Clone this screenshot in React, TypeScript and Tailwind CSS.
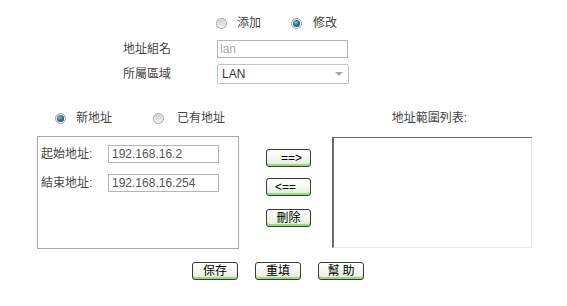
import React from "react";

const FONT = { fontFamily: '"Liberation Sans", "Noto Sans CJK TC", sans-serif' };

function Radio({ checked }: { checked?: boolean }) {
  return (
    <div className="w-[11px] h-[11px] rounded-full border border-[#a0a0a0] bg-gradient-to-b from-[#e6e6e6] to-[#fafafa] flex items-center justify-center shrink-0">
      {checked ? (
        <div className="w-[7px] h-[7px] rounded-full bg-[radial-gradient(circle_at_40%_35%,#7fc3e6_0%,#2a6f96_45%,#123a55_100%)]" />
      ) : (
        <div className="w-[7px] h-[7px] rounded-full bg-gradient-to-b from-[#cfcfcf] to-[#f0f0f0]" />
      )}
    </div>
  );
}

function Btn({ children, className = "" }: { children: React.ReactNode; className?: string }) {
  return (
    <div
      className={
        "w-[45px] h-[18px] rounded-[3px] border border-[#3a3a3a] bg-gradient-to-b from-[#ffffff] via-[#f3f7f0] to-[#dfeed6] shadow-[inset_0_-2px_0_#9ad87a] flex items-center justify-center text-[12px] leading-none text-black " +
        className
      }
    >
      {children}
    </div>
  );
}

export default function App() {
  return (
    <div className="w-[567px] h-[306px] bg-white text-[12px] text-[#444] overflow-hidden" style={FONT}>
      {/* mode radios */}
      <div className="pt-[15px] h-[31px] flex items-center pl-[216px]">
        <Radio />
        <span className="ml-[10px] leading-none">添加</span>
        <div className="ml-[30px]">
          <Radio checked />
        </div>
        <span className="ml-[11px] leading-none">修改</span>
      </div>

      {/* group name */}
      <div className="mt-[9px] h-[18px] flex items-center pl-[123px]">
        <span className="w-[94px] leading-none">地址組名</span>
        <div className="w-[131px] h-[18px] border border-[#b4b4b4] flex items-center pl-[2px] text-[#aaaaaa] leading-none">
          lan
        </div>
      </div>

      {/* zone */}
      <div className="mt-[6px] h-[20px] flex items-center pl-[123px]">
        <span className="w-[94px] leading-none">所屬區域</span>
        <div className="w-[132px] h-[20px] border border-[#c4c4c4] rounded-[2px] flex items-center justify-between pl-[4px] pr-[5px] text-[#333] leading-none">
          <span>LAN</span>
          <div className="w-0 h-0 border-l-[4px] border-r-[4px] border-t-[4px] border-l-transparent border-r-transparent border-t-[#aaaaaa]" />
        </div>
      </div>

      {/* address radios + list title */}
      <div className="mt-[26px] h-[16px] flex items-center">
        <div className="pl-[55px] flex items-center w-[332px]">
          <Radio checked />
          <span className="ml-[10px] leading-none">新地址</span>
          <div className="ml-[41px]">
            <Radio />
          </div>
          <span className="ml-[13px] leading-none">已有地址</span>
        </div>
        <div className="w-[200px] flex justify-center leading-none">
          <span className="-ml-[5px]">地址範圍列表:</span>
        </div>
      </div>

      {/* boxes */}
      <div className="mt-[10px] flex items-start">
        <div className="ml-[37px] w-[202px] h-[113px] border border-[#a8a8a8] pt-[8px]">
          <div className="h-[18px] flex items-center pl-[3px]">
            <span className="w-[67px] leading-none">起始地址:</span>
            <div className="w-[111px] h-[18px] border border-[#b4b4b4] flex items-center pl-[3px] text-[#555] leading-none">
              192.168.16.2
            </div>
          </div>
          <div className="mt-[11px] h-[18px] flex items-center pl-[3px]">
            <span className="w-[67px] leading-none">結束地址:</span>
            <div className="w-[111px] h-[18px] border border-[#b4b4b4] flex items-center pl-[3px] text-[#555] leading-none">
              192.168.16.254
            </div>
          </div>
        </div>

        <div className="ml-[27px] pt-[13px] flex flex-col">
          <Btn className="pl-[6px]">==&gt;</Btn>
          <Btn className="mt-[11px] pr-[6px]">&lt;==</Btn>
          <Btn className="mt-[13px]">刪除</Btn>
        </div>

        <div className="ml-[21px] mt-[1px] w-[200px] h-[111px] border-l-2 border-t border-l-[#6a6a6a] border-t-[#6a6a6a] border-r border-b border-r-[#e6e6e6] border-b-[#e6e6e6] bg-white" />
      </div>

      {/* bottom buttons */}
      <div className="mt-[13px] flex pl-[192px] gap-[17px]">
        <Btn className="w-[46px]">保存</Btn>
        <Btn className="w-[46px]">重填</Btn>
        <Btn className="w-[46px] tracking-[3px] pl-[3px]">幫助</Btn>
      </div>
    </div>
  );
}
